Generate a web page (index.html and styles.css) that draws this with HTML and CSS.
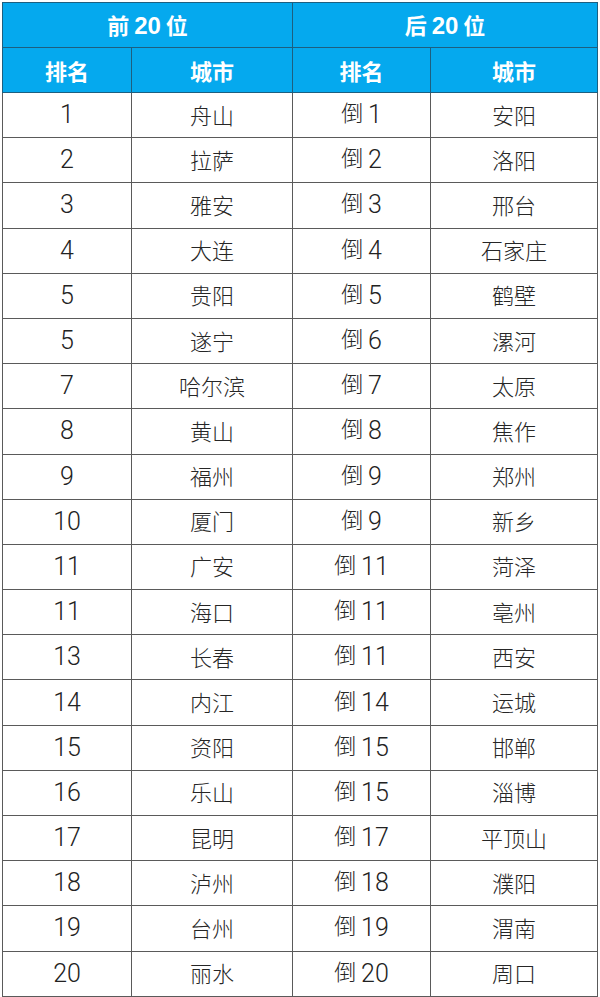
FILE: index.html
```html
<!DOCTYPE html>
<html lang="zh-CN">
<head>
<meta charset="utf-8">
<title>排名</title>
<link rel="stylesheet" href="styles.css">
</head>
<body>
<div class="wrap">
<table class="rank">
<colgroup>
<col class="c1"><col class="c2"><col class="c3"><col class="c4">
</colgroup>
<thead>
<tr class="h1"><th colspan="2">前 <span class="hn">20</span> 位</th><th colspan="2">后 <span class="hn">20</span> 位</th></tr>
<tr class="h2"><th>排名</th><th>城市</th><th>排名</th><th>城市</th></tr>
</thead>
<tbody>
<tr><td><span class="n">1</span></td><td>舟山</td><td>倒 <span class="n">1</span></td><td>安阳</td></tr>
<tr><td><span class="n">2</span></td><td>拉萨</td><td>倒 <span class="n">2</span></td><td>洛阳</td></tr>
<tr><td><span class="n">3</span></td><td>雅安</td><td>倒 <span class="n">3</span></td><td>邢台</td></tr>
<tr><td><span class="n">4</span></td><td>大连</td><td>倒 <span class="n">4</span></td><td>石家庄</td></tr>
<tr><td><span class="n">5</span></td><td>贵阳</td><td>倒 <span class="n">5</span></td><td>鹤壁</td></tr>
<tr><td><span class="n">5</span></td><td>遂宁</td><td>倒 <span class="n">6</span></td><td>漯河</td></tr>
<tr><td><span class="n">7</span></td><td>哈尔滨</td><td>倒 <span class="n">7</span></td><td>太原</td></tr>
<tr><td><span class="n">8</span></td><td>黄山</td><td>倒 <span class="n">8</span></td><td>焦作</td></tr>
<tr><td><span class="n">9</span></td><td>福州</td><td>倒 <span class="n">9</span></td><td>郑州</td></tr>
<tr><td><span class="n">10</span></td><td>厦门</td><td>倒 <span class="n">9</span></td><td>新乡</td></tr>
<tr><td><span class="n">11</span></td><td>广安</td><td>倒 <span class="n">11</span></td><td>菏泽</td></tr>
<tr><td><span class="n">11</span></td><td>海口</td><td>倒 <span class="n">11</span></td><td>亳州</td></tr>
<tr><td><span class="n">13</span></td><td>长春</td><td>倒 <span class="n">11</span></td><td>西安</td></tr>
<tr><td><span class="n">14</span></td><td>内江</td><td>倒 <span class="n">14</span></td><td>运城</td></tr>
<tr><td><span class="n">15</span></td><td>资阳</td><td>倒 <span class="n">15</span></td><td>邯郸</td></tr>
<tr><td><span class="n">16</span></td><td>乐山</td><td>倒 <span class="n">15</span></td><td>淄博</td></tr>
<tr><td><span class="n">17</span></td><td>昆明</td><td>倒 <span class="n">17</span></td><td>平顶山</td></tr>
<tr><td><span class="n">18</span></td><td>泸州</td><td>倒 <span class="n">18</span></td><td>濮阳</td></tr>
<tr><td><span class="n">19</span></td><td>台州</td><td>倒 <span class="n">19</span></td><td>渭南</td></tr>
<tr><td><span class="n">20</span></td><td>丽水</td><td>倒 <span class="n">20</span></td><td>周口</td></tr>
</tbody>
</table>
</div>
</body>
</html>
```
FILE: styles.css
```css
html, body {
  margin: 0;
  padding: 0;
  background: #ffffff;
}
.wrap {
  padding: 2px 2px 0 2px;
}
.rank {
  border-collapse: collapse;
  table-layout: fixed;
  width: 596px;
  height: 995px;
  font-family: "Noto Sans CJK SC", sans-serif;
  font-size: 22px;
  color: #262626;
}
.c1 { width: 129px; }
.c2 { width: 161px; }
.c3 { width: 138px; }
.c4 { width: 167px; }
.rank th,
.rank td {
  border: 1px solid #5a5a5a;
  text-align: center;
  vertical-align: middle;
  padding: 0;
  height: 44px;
  line-height: 1;
}
.rank th {
  background: #05a9ee;
  color: #ffffff;
  font-weight: bold;
  font-size: 22px;
  border-color: #1d5f80;
}
.rank td {
  font-weight: 300;
  height: 41px;
  padding-bottom: 3px;
}
.n {
  font-family: "Roboto", "Liberation Sans", sans-serif;
  font-weight: 300;
  font-size: 25px;
  color: #222222;
  vertical-align: -2px;
}
.hn {
  font-family: "Liberation Sans", sans-serif;
  font-weight: bold;
  font-size: 24px;
}
```
